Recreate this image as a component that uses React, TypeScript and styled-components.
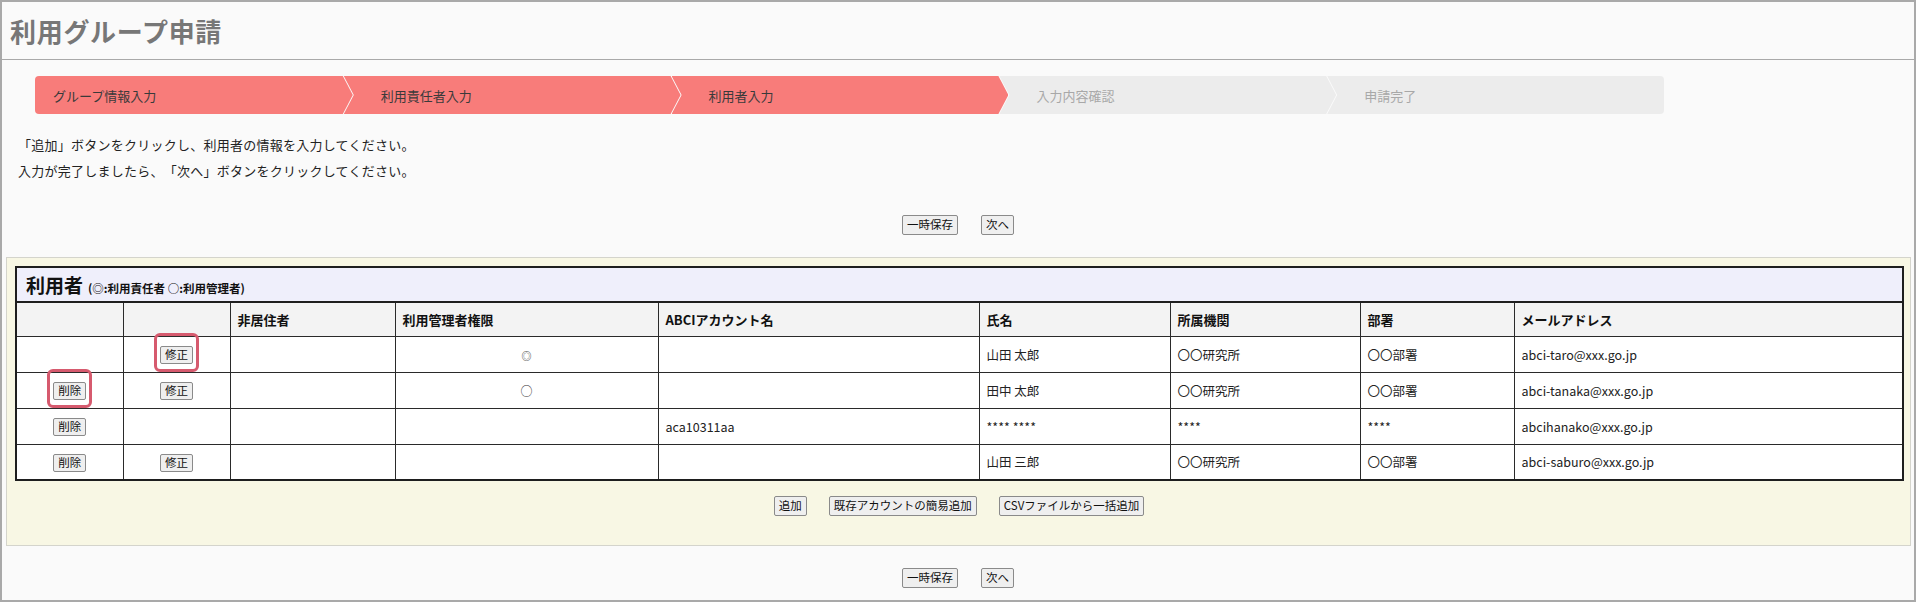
import React from "react";
import styled, { createGlobalStyle, css } from "styled-components";

const GlobalStyle = createGlobalStyle`
  html, body { margin: 0; padding: 0; background: #ffffff; }
  body { font-family: "Noto Sans CJK JP", "Noto Sans", sans-serif; color: #222; }
  * { box-sizing: border-box; }
`;

const Frame = styled.div`
  width: 1916px;
  height: 602px;
  border: 2px solid #a9a9a9;
  background: #fafafa;
  display: flex;
  flex-direction: column;
`;

const Header = styled.header`
  height: 58px;
  border-bottom: 1px solid #a9a9a9;
  padding-left: 8px;
  display: flex;
  align-items: center;
`;

const Title = styled.h1`
  margin: 0;
  font-size: 26px;
  font-weight: 700;
  color: #777;
  letter-spacing: 0.7px;
  line-height: 1;
`;

const Steps = styled.ol`
  list-style: none;
  margin: 16px 0 0 33px;
  padding: 0;
  width: 1629px;
  height: 38px;
  display: flex;
  border-radius: 4px;
  overflow: hidden;
`;

const Step = styled.li<{ $active: boolean; $first?: boolean; $last?: boolean }>`
  flex: 1;
  height: 38px;
  display: flex;
  align-items: center;
  font-size: 13px;
  background: ${(p) => (p.$active ? "#f87c7a" : "#ececec")};
  color: ${(p) => (p.$active ? "#3a3a3a" : "#a8a8a8")};
  padding-left: ${(p) => (p.$first ? "18px" : "37px")};
  margin-left: ${(p) => (p.$first ? "0" : "-9px")};
  clip-path: ${(p) =>
    p.$last
      ? "polygon(0 0, 100% 0, 100% 100%, 0 100%, 10px 50%)"
      : p.$first
      ? "polygon(0 0, calc(100% - 10px) 0, 100% 50%, calc(100% - 10px) 100%, 0 100%)"
      : "polygon(0 0, calc(100% - 10px) 0, 100% 50%, calc(100% - 10px) 100%, 0 100%, 10px 50%)"};
`;

const Instructions = styled.div`
  margin: 18px 0 0 16px;
  font-size: 13px;
  letter-spacing: 0.25px;
  text-spacing-trim: space-all;
  line-height: 26px;
  color: #222;
`;

const Line = styled.p`
  margin: 0;
`;

const ButtonBar = styled.div<{ $top: number; $gap: number }>`
  display: flex;
  justify-content: center;
  gap: ${(p) => p.$gap}px;
  margin-top: ${(p) => p.$top}px;
`;

const Button = styled.button<{ $small?: boolean }>`
  font-family: "Noto Sans CJK JP", sans-serif;
  font-size: 11.5px;
  line-height: 1;
  height: ${(p) => (p.$small ? "18px" : "20px")};
  padding: 0 4px;
  background: #efefef;
  color: #111;
  border: 1px solid #8a8a8a;
  border-radius: 2px;
  cursor: pointer;
`;

const Section = styled.section`
  margin: 22px 3px 0 4px;
  background: #f8f7e4;
  border: 1px solid #d4d4cc;
  padding: 8px 7px 29px 8px;
`;

const Table = styled.table`
  width: 100%;
  border-collapse: collapse;
  table-layout: fixed;
  border: 2px solid #1e1e1e;
  background: #fff;
`;

const TitleCell = styled.th`
  background: #efeffb;
  text-align: left;
  height: 35px;
  padding: 0 9px;
  border-bottom: 2px solid #1e1e1e;
  white-space: nowrap;
`;

const TitleMain = styled.span`
  font-size: 19px;
  font-weight: 700;
  color: #111;
`;

const TitleNote = styled.span`
  font-size: 11.5px;
  font-weight: 700;
  margin-left: 5px;
  color: #111;
`;

const HeadCell = styled.th`
  background: #f3f3f3;
  height: 34px;
  text-align: left;
  padding: 0 7px;
  font-size: 13px;
  font-weight: 700;
  border: 1px solid #2a2a2a;
  color: #111;
`;

const Cell = styled.td<{ $center?: boolean }>`
  height: 36px;
  padding: 0 7px;
  font-size: 12.5px;
  border: 1px solid #2a2a2a;
  color: #222;
  white-space: nowrap;
  ${(p) =>
    p.$center &&
    css`
      text-align: center;
    `}
`;

const Mark = styled.span<{ $size: number }>`
  font-size: ${(p) => p.$size}px;
  color: #333;
`;

const Highlight = styled.span`
  position: relative;
  display: inline-block;
  &::after {
    content: "";
    position: absolute;
    top: -11px;
    bottom: -8px;
    left: -6px;
    right: -6px;
    border: 3px solid #d65a6e;
    border-radius: 6px;
    pointer-events: none;
  }
`;

const widths = [107, 107, 165, 263, 321, 191, 190, 154, 389];

type Row = {
  del: boolean;
  edit: boolean;
  hlDel?: boolean;
  hlEdit?: boolean;
  admin: string;
  acct: string;
  name: string;
  org: string;
  dept: string;
  mail: string;
};

const rows: Row[] = [
  { del: false, edit: true, hlEdit: true, admin: "◎", acct: "", name: "山田 太郎", org: "〇〇研究所", dept: "〇〇部署", mail: "abci-taro@xxx.go.jp" },
  { del: true, edit: true, hlDel: true, admin: "○", acct: "", name: "田中 太郎", org: "〇〇研究所", dept: "〇〇部署", mail: "abci-tanaka@xxx.go.jp" },
  { del: true, edit: false, admin: "", acct: "aca10311aa", name: "**** ****", org: "****", dept: "****", mail: "abcihanako@xxx.go.jp" },
  { del: true, edit: true, admin: "", acct: "", name: "山田 三郎", org: "〇〇研究所", dept: "〇〇部署", mail: "abci-saburo@xxx.go.jp" },
];

const steps = [
  { label: "グループ情報入力", active: true },
  { label: "利用責任者入力", active: true },
  { label: "利用者入力", active: true },
  { label: "入力内容確認", active: false },
  { label: "申請完了", active: false },
];

function ActionButton({ label, highlight }: { label: string; highlight?: boolean }) {
  const btn = <Button $small>{label}</Button>;
  return highlight ? <Highlight>{btn}</Highlight> : btn;
}

export default function App() {
  return (
    <>
      <GlobalStyle />
      <Frame>
        <Header>
          <Title>利用グループ申請</Title>
        </Header>
        <Steps>
          {steps.map((s, i) => (
            <Step key={s.label} $active={s.active} $first={i === 0} $last={i === steps.length - 1}>
              {s.label}
            </Step>
          ))}
        </Steps>
        <Instructions>
          <Line>「追加」ボタンをクリックし、利用者の情報を入力してください。</Line>
          <Line>入力が完了しましたら、「次へ」ボタンをクリックしてください。</Line>
        </Instructions>
        <ButtonBar $top={31} $gap={23}>
          <Button>一時保存</Button>
          <Button>次へ</Button>
        </ButtonBar>
        <Section>
          <Table>
            <colgroup>
              {widths.map((w, i) => (
                <col key={i} style={{ width: w }} />
              ))}
            </colgroup>
            <thead>
              <tr>
                <TitleCell colSpan={9}>
                  <TitleMain>利用者</TitleMain>
                  <TitleNote>(◎:利用責任者 ○:利用管理者)</TitleNote>
                </TitleCell>
              </tr>
              <tr>
                <HeadCell />
                <HeadCell />
                <HeadCell>非居住者</HeadCell>
                <HeadCell>利用管理者権限</HeadCell>
                <HeadCell>ABCIアカウント名</HeadCell>
                <HeadCell>氏名</HeadCell>
                <HeadCell>所属機関</HeadCell>
                <HeadCell>部署</HeadCell>
                <HeadCell>メールアドレス</HeadCell>
              </tr>
            </thead>
            <tbody>
              {rows.map((r, i) => (
                <tr key={i}>
                  <Cell $center>{r.del && <ActionButton label="削除" highlight={r.hlDel} />}</Cell>
                  <Cell $center>{r.edit && <ActionButton label="修正" highlight={r.hlEdit} />}</Cell>
                  <Cell />
                  <Cell $center>
                    {r.admin && <Mark $size={r.admin === "◎" ? 10 : 12}>{r.admin}</Mark>}
                  </Cell>
                  <Cell>{r.acct}</Cell>
                  <Cell>{r.name}</Cell>
                  <Cell>{r.org}</Cell>
                  <Cell>{r.dept}</Cell>
                  <Cell>{r.mail}</Cell>
                </tr>
              ))}
            </tbody>
          </Table>
          <ButtonBar $top={15} $gap={22}>
            <Button>追加</Button>
            <Button>既存アカウントの簡易追加</Button>
            <Button>CSVファイルから一括追加</Button>
          </ButtonBar>
        </Section>
        <ButtonBar $top={22} $gap={23}>
          <Button>一時保存</Button>
          <Button>次へ</Button>
        </ButtonBar>
      </Frame>
    </>
  );
}
